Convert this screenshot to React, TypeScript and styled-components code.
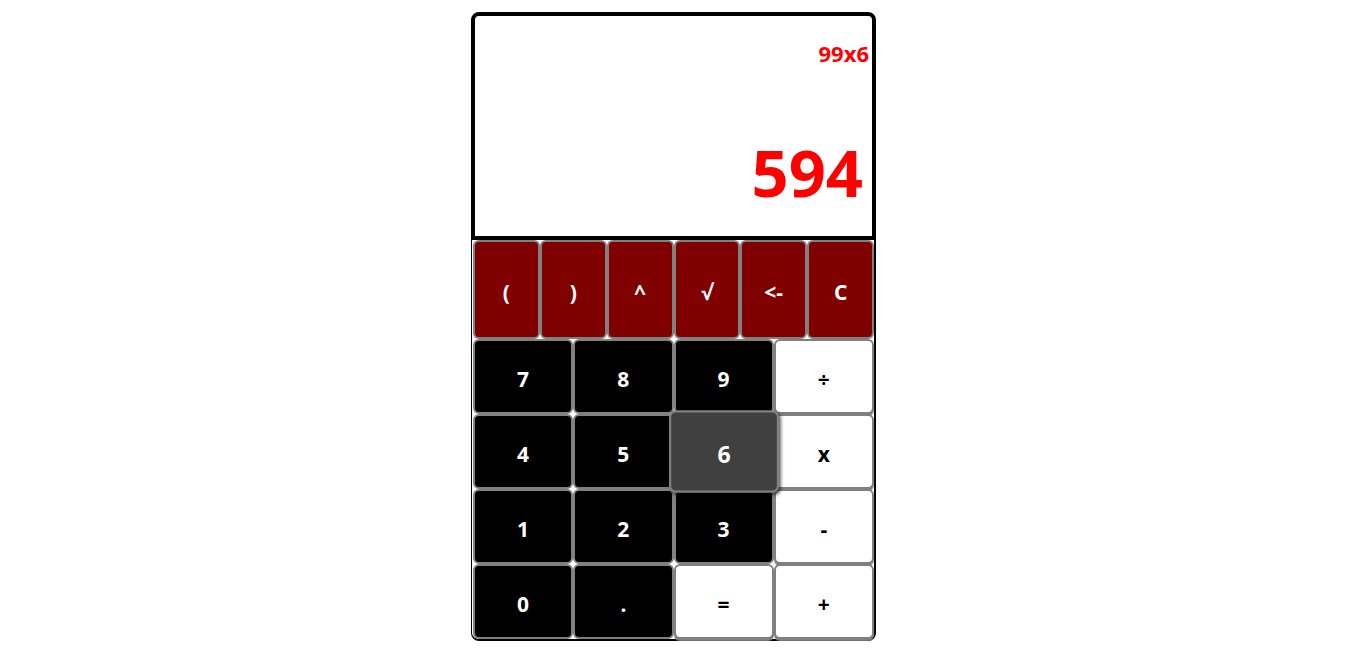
import React from 'react'
import styled, { createGlobalStyle, css } from 'styled-components'

type Variant = 'fn' | 'num' | 'op'

interface IKey {
    label: string,
    variant: Variant,
    span: number,
    active?: boolean,
}

const keys: IKey[] = [
    { label: '(', variant: 'fn', span: 2 },
    { label: ')', variant: 'fn', span: 2 },
    { label: '^', variant: 'fn', span: 2 },
    { label: '√', variant: 'fn', span: 2 },
    { label: '<-', variant: 'fn', span: 2 },
    { label: 'C', variant: 'fn', span: 2 },
    { label: '7', variant: 'num', span: 3 },
    { label: '8', variant: 'num', span: 3 },
    { label: '9', variant: 'num', span: 3 },
    { label: '÷', variant: 'op', span: 3 },
    { label: '4', variant: 'num', span: 3 },
    { label: '5', variant: 'num', span: 3 },
    { label: '6', variant: 'num', span: 3, active: true },
    { label: 'x', variant: 'op', span: 3 },
    { label: '1', variant: 'num', span: 3 },
    { label: '2', variant: 'num', span: 3 },
    { label: '3', variant: 'num', span: 3 },
    { label: '-', variant: 'op', span: 3 },
    { label: '0', variant: 'num', span: 3 },
    { label: '.', variant: 'num', span: 3 },
    { label: '=', variant: 'op', span: 3 },
    { label: '+', variant: 'op', span: 3 },
]

export default function App() {
    const [expression] = React.useState('99x6')
    const [result] = React.useState('594')

    return (
        <>
            <GlobalStyle />
            <Calculator>
                <Display>
                    <Expression>{expression}</Expression>
                    <Result>{result}</Result>
                </Display>
                <Keypad>
                    {keys.map((k, i) => (
                        <Key key={i} $variant={k.variant} $span={k.span} $active={k.active}>
                            {k.label}
                        </Key>
                    ))}
                </Keypad>
            </Calculator>
        </>
    )
}

const GlobalStyle = createGlobalStyle`
    * {
        box-sizing: border-box;
    }
    body {
        margin: 0;
        background: #ffffff;
        font-family: "Open Sans", "Noto Sans", sans-serif;
    }
`

const Calculator = styled.div`
    width: 405px;
    margin: 12px 0 0 calc(50% - 204px);
    display: flex;
    flex-direction: column;
`

const Display = styled.div`
    height: 228px;
    border: 4px solid #000;
    border-radius: 8px 8px 0 0;
    background: #fff;
    display: flex;
    flex-direction: column;
    align-items: flex-end;
    padding: 23px 3px 0 0;
`

const Expression = styled.div`
    color: #ff0000;
    font-size: 22px;
    font-weight: 700;
    line-height: 28px;
`

const Result = styled.div`
    color: #ff0000;
    font-size: 65px;
    font-weight: 700;
    line-height: 80px;
    margin-top: 65px;
    padding-right: 6px;
`

const Keypad = styled.div`
    display: grid;
    grid-template-columns: repeat(12, 1fr);
    grid-template-rows: 99px repeat(4, 75px);
    background: #fff;
    padding-left: 1px;
    border-left: 1px solid #000;
    border-right: 2px solid #000;
    border-bottom: 2px solid #000;
    border-radius: 0 0 8px 8px;
`

const variants = {
    fn: css`
        background: #800000;
        color: #fff;
    `,
    num: css`
        background: #000;
        color: #fff;
    `,
    op: css`
        background: #fff;
        color: #000;
        box-shadow: 0 2px 1px #808080;
    `,
}

const Key = styled.button<{ $variant: Variant, $span: number, $active?: boolean }>`
    grid-column: span ${p => p.$span};
    border: 2px solid #808080;
    border-radius: 6px;
    font-family: "Open Sans", "Noto Sans", sans-serif;
    font-size: 21px;
    font-weight: 700;
    padding: 4px 0 0;
    cursor: pointer;
    ${p => variants[p.$variant]}
    ${p => p.$active && css`
        background: #404040;
        transform: scale(1.1);
        box-shadow: 1px 2px 3px rgba(0, 0, 0, 0.6);
        position: relative;
        z-index: 1;
    `}
`
